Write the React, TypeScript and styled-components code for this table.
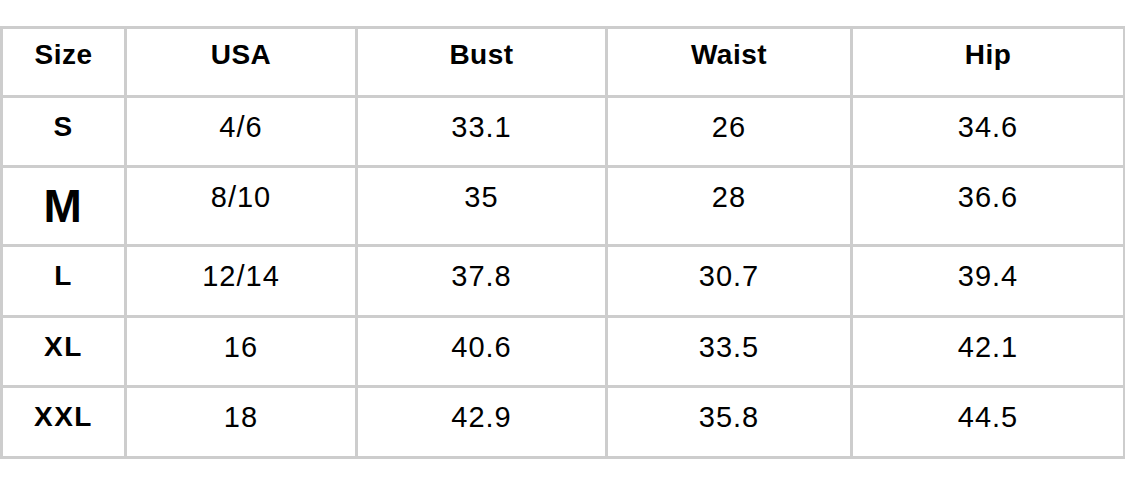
import React from "react";
import styled, { createGlobalStyle } from "styled-components";

const Global = createGlobalStyle`
  html, body {
    margin: 0;
    padding: 0;
    background: #ffffff;
    overflow: hidden;
  }
  body {
    font-family: "Liberation Sans", Arial, Helvetica, sans-serif;
  }
`;

const Page = styled.div`
  padding-top: 26px;
  width: 1125px;
  overflow: hidden;
`;

const Grid = styled.div`
  display: grid;
  grid-template-columns: 121px 228px 247px 242px 270px;
  grid-template-rows: 66px 67px 76px 68px 67px 68px;
  gap: 3px;
  padding: 3px;
  background: #cdcdcd;
  width: max-content;
`;

const Cell = styled.div<{ $head?: boolean; $bold?: boolean; $big?: boolean }>`
  background: #ffffff;
  text-align: center;
  color: #000;
  font-size: ${(p) => (p.$big ? "46px" : p.$head || p.$bold ? "28px" : "29px")};
  font-weight: ${(p) => (p.$head || p.$bold ? 700 : 400)};
  letter-spacing: ${(p) => (p.$head ? "0.5px" : p.$bold ? "1.5px" : "1px")};
  line-height: ${(p) => (p.$big ? "53px" : "32px")};
  padding-top: ${(p) => (p.$head ? "10px" : p.$big ? "12px" : "13px")};
  box-sizing: border-box;
  white-space: nowrap;
`;

const headers = ["Size", "USA", "Bust", "Waist", "Hip"];
const rows = [
  ["S", "4/6", "33.1", "26", "34.6"],
  ["M", "8/10", "35", "28", "36.6"],
  ["L", "12/14", "37.8", "30.7", "39.4"],
  ["XL", "16", "40.6", "33.5", "42.1"],
  ["XXL", "18", "42.9", "35.8", "44.5"],
];

export default function App() {
  return (
    <>
      <Global />
      <Page>
        <Grid>
          {headers.map((h) => (
            <Cell key={h} $head>
              {h}
            </Cell>
          ))}
          {rows.map((r) =>
            r.map((v, i) => (
              <Cell
                key={r[0] + i}
                $bold={i === 0}
                $big={i === 0 && v === "M"}
              >
                {v}
              </Cell>
            ))
          )}
        </Grid>
      </Page>
    </>
  );
}
